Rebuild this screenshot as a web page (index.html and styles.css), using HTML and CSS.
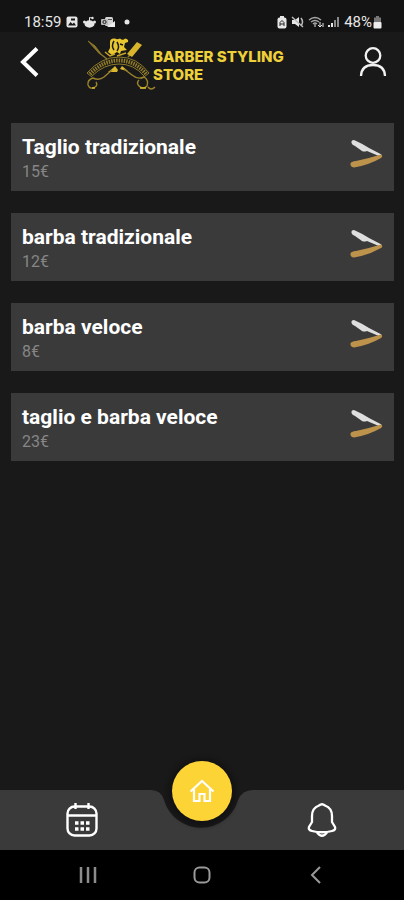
FILE: index.html
```html
<!DOCTYPE html>
<html lang="it">
<head>
<meta charset="utf-8">
<meta name="viewport" content="width=device-width, initial-scale=1">
<title>Barber Styling Store</title>
<link rel="stylesheet" href="styles.css">
</head>
<body>
<svg class="defs" aria-hidden="true">
  <symbol id="razor" viewBox="0 0 34 30">
    <path d="M4 1Q1 1 1.500 4Q2 6 5 7L12 12Q14 13 17 12L30 17.500L31.500 15.500L19 9Q11 4 4 1Z" fill="#dedede"/>
    <path d="M31 15.500Q33.500 17 31 19Q19 26 4 28.500Q0 28 .5 24.500Q1 22.500 6 22Q20 19 31 15.500Z" fill="#bd934c"/>
  </symbol>
</svg>
<div class="app">
  <div class="status">
    <div class="status-group">
      <span class="clock">18:59</span>
      <svg width="12" height="12" viewBox="0 0 12 12"><rect x=".5" y=".5" width="11" height="11" rx="2" fill="#e6e6e6"/><path d="M2 9.500L4.500 6L6.500 8L8 6.500L10 9.500Z" fill="#141414"/><rect x="5" y="2.500" width="4" height="2" fill="#141414"/></svg>
      <svg width="13" height="12" viewBox="0 0 13 12"><ellipse cx="6.500" cy="8" rx="5" ry="3.700" fill="#e6e6e6"/><circle cx="1.500" cy="6" r="1.500" fill="#e6e6e6"/><circle cx="11.500" cy="6" r="1.500" fill="#e6e6e6"/><path d="M6.500 5V1.500L9 2" fill="none" stroke="#e6e6e6"/><circle cx="9.500" cy="2" r="1.200" fill="#e6e6e6"/></svg>
      <svg width="14" height="12" viewBox="0 0 14 12"><rect x="4" y="1" width="8" height="9" rx="1.500" fill="#d5d5d5"/><rect y="3" width="7" height="6" rx="1" fill="#bbb"/><circle cx="3.500" cy="6" r="1.600" fill="none" stroke="#222"/><path d="M6 11H14V5L10 8Z" fill="#eee"/><path d="M7 3.500H11" stroke="#555"/></svg>
      <svg class="dot" width="6" height="6" viewBox="0 0 6 6"><circle cx="3" cy="3" r="2.500" fill="#e6e6e6"/></svg>
    </div>
    <div class="status-group status-right">
      <svg width="10" height="13" viewBox="0 0 10 13"><rect x="3" width="4" height="3" fill="#e6e6e6"/><rect x=".5" y="1.500" width="9" height="11" rx="2" fill="#e6e6e6"/><path d="M3 10V6.500L5 4.500L7 6.500V10M3 8H7" fill="none" stroke="#222"/></svg>
      <svg width="13" height="12" viewBox="0 0 13 12"><path d="M1 4H4L8 1V11L4 8H1Z" fill="#e6e6e6"/><path d="M10 2Q13 6 10 10M1 1L12 11" fill="none" stroke="#bbb" stroke-width="1.500"/></svg>
      <svg width="16" height="12" viewBox="0 0 16 12"><path d="M1 4Q7 -1 13 4M3 6Q7 3 11 6M5 8Q7 6 9 8" fill="none" stroke="#a8a8a8" stroke-width="1.400"/><path d="M7 8V11M12 6V11M10 9L12 11L14 9M15 11V7" fill="none" stroke="#e6e6e6"/></svg>
      <svg width="12" height="12" viewBox="0 0 12 12"><path d="M1 11V9M4 11V7" stroke="#e6e6e6" stroke-width="2"/><path d="M7 11V4M10 11V1" stroke="#8a8a8a" stroke-width="2"/></svg>
      <span class="battery">48%<svg width="9" height="13" viewBox="0 0 9 13"><path d="M3 0H6V1.500H8V6H1V1.500H3Z" fill="#777"/><rect x=".5" y="6" width="8" height="6.500" rx="1" fill="#eee"/></svg></span>
    </div>
  </div>

  <header class="header">
    <button class="icon-button back" aria-label="Indietro">
      <svg width="20" height="32" viewBox="0 0 20 32"><path d="M17 2.500L3 16L17 29.500" fill="none" stroke="#fff" stroke-width="4"/></svg>
    </button>
    <a class="brand" href="#">
      <svg class="logo" width="70" height="54" viewBox="0 0 70 54" fill="none" stroke="#8d7929">
        <path d="M2 4L9 9L15 17L12 15Z" fill="#8d7929"/>
        <path d="M12 15L21 22M42 20L53 8" stroke-width="1.500"/>
        <path d="M41 17L51 5L56 8L46 20Z" fill="#d9b62c" stroke="none"/>
        <path d="M24 5Q24 1 29 1.500Q31 3 34 1.500Q37 4 39 1.500Q43 2 42 5L39 6L38 10L41 13L35 14L34 17L31 15L26 18L22 15L24 11Z" fill="#e8c72f" stroke="none"/>
        <path d="M28 4Q25 9 28 13M31 5Q34 10 31 14M34 7L37 8" stroke="#191919" stroke-width="1.500"/>
        <path d="M19 15L24 19L29 17M31 19L40 16" stroke="#c5a52a" stroke-width="1.500"/>
        <path d="M1 36Q15 20 33 20Q51 20 63 36"/>
        <path d="M6 39Q18 27 33 27Q48 27 58 39"/>
        <path d="M4 37Q17 23.500 33 23.500Q49 23.500 60 37" stroke="#917c2a" stroke-width="4" stroke-dasharray="1.500 1"/>
        <path d="M1 36L6 40M63 36L58 40"/>
        <path d="M22 35L27 31L29 29L32 33L31 35ZM34 32L36 29L42 34L37 33Z" fill="#dcb92c" stroke="none"/>
        <path d="M26 33L18 40Q13 44 7 41Q1 43 2 48Q4 53 9 50Q12 48 10 45M38 32L46 38Q52 43 58 40Q63 43 61 49Q57 53 53 49Q50 46 53 43M62 50Q65 54 69 50" stroke="#9c842b" stroke-width="1.400"/>
        <path d="M6 51H9M54 51H60" stroke="#dcb92c" stroke-width="1.500"/>
      </svg>
      <span class="brand-name">BARBER STYLING<br>STORE</span>
    </a>
    <button class="icon-button" aria-label="Profilo">
      <svg width="28" height="32" viewBox="0 0 28 32" fill="none" stroke="#f2f2f2" stroke-width="2.300"><circle cx="14" cy="9.500" r="7.300"/><path d="M2 30Q2.500 19 14 19Q25.500 19 26 30"/></svg>
    </button>
  </header>

  <main class="services">
    <a class="service" href="#"><span><span class="name">Taglio tradizionale</span><span class="price">15€</span></span><svg class="razor" aria-hidden="true"><use href="#razor"/></svg></a>
    <a class="service" href="#"><span><span class="name">barba tradizionale</span><span class="price">12€</span></span><svg class="razor" aria-hidden="true"><use href="#razor"/></svg></a>
    <a class="service" href="#"><span><span class="name">barba veloce</span><span class="price">8€</span></span><svg class="razor" aria-hidden="true"><use href="#razor"/></svg></a>
    <a class="service" href="#"><span><span class="name">taglio e barba veloce</span><span class="price">23€</span></span><svg class="razor" aria-hidden="true"><use href="#razor"/></svg></a>
  </main>

  <nav class="tabs">
    <button class="tab tab-left" aria-label="Calendario">
      <svg width="34" height="36" viewBox="0 0 34 36" fill="none" stroke="#fff" stroke-width="2.400"><rect x="2.500" y="4.500" width="29" height="29" rx="7"/><path d="M3 13.500H31M10.500 1V7M23.500 1V7"/><path d="M10 21H25M10 27H25" stroke-width="3.500" stroke-dasharray="3.500 2"/></svg>
    </button>
    <div class="notch">
      <svg width="112" height="60" viewBox="0 0 112 60"><path d="M0 0H6Q16 0 19 10A38.500 38.500 0 0 0 93 10Q97 0 108 0H112V60H0Z" fill="#3a3a3a"/></svg>
      <button class="home" aria-label="Home">
        <svg width="26" height="24" viewBox="0 0 26 24" fill="none" stroke="#fff" stroke-width="2.200"><path d="M1.500 12.500L13 2L24.500 12.500M5 10V22H10.500V15H15.500V22H21V10"/></svg>
      </button>
    </div>
    <button class="tab tab-right" aria-label="Notifiche">
      <svg width="30" height="36" viewBox="0 0 30 36" fill="none" stroke="#fff" stroke-width="2.300"><path d="M12 3.500Q15 1 18 3.500Q25 6 25 14V20L28 25Q29 28 25 29Q15 31.500 5 29Q1 28 2 25L5 20V14Q5 6 12 3.500Z"/><path d="M10 30.500Q15 37 20 30.500"/></svg>
    </button>
  </nav>

  <div class="system-nav">
    <button class="icon-button" aria-label="Recenti"><svg width="18" height="18" viewBox="0 0 18 18"><path d="M2 1V17M9 1V17M16 1V17" stroke="#8c8c8c" stroke-width="2.500"/></svg></button>
    <button class="icon-button" aria-label="Schermata Home"><svg width="18" height="18" viewBox="0 0 18 18"><rect x="1.500" y="1.500" width="15" height="15" rx="5" fill="none" stroke="#999" stroke-width="2"/></svg></button>
    <button class="icon-button" aria-label="Indietro di sistema"><svg width="18" height="18" viewBox="0 0 18 18"><path d="M13 1L5 9L13 17" fill="none" stroke="#999" stroke-width="2"/></svg></button>
  </div>
</div>
</body>
</html>
```
FILE: styles.css
```css
* {
  box-sizing: border-box;
}

body {
  margin: 0;
  background: #191919;
  color: #fff;
  font-family: Roboto, "Liberation Sans", sans-serif;
}

button {
  padding: 0;
  border: 0;
  background: none;
  cursor: pointer;
}

a {
  color: inherit;
  text-decoration: none;
}

svg {
  display: block;
  flex: none;
}

.defs {
  position: absolute;
  width: 0;
  height: 0;
}

.app {
  display: flex;
  flex-direction: column;
  min-height: 100vh;
}

.status {
  display: flex;
  justify-content: space-between;
  align-items: flex-end;
  height: 32px;
  padding: 0 22px 0 24px;
  background: #131313;
  color: #e6e6e6;
  font-size: 15px;
  line-height: 20px;
}

.status-group,
.battery {
  display: flex;
  align-items: center;
}

.status-group {
  gap: 5px;
}

.status-right {
  gap: 4px;
}

.battery {
  gap: 1px;
}

.dot {
  margin-left: 4px;
}

.header {
  display: flex;
  align-items: center;
  height: 64px;
  padding: 0 17px 4px 20px;
}

.icon-button {
  display: flex;
  align-items: center;
  justify-content: center;
}

.brand {
  display: flex;
  flex: 1;
  align-items: center;
  margin-left: 46px;
}

.logo {
  margin: 4px -3px 0 0;
}

.brand-name {
  margin-top: 8px;
  color: #edd03a;
  font-family: Inter, Roboto, sans-serif;
  font-size: 15px;
  font-weight: 800;
  line-height: 18px;
}

.services {
  display: flex;
  flex: 1;
  flex-direction: column;
  gap: 22px;
  padding: 27px 10px 22px 11px;
}

.service {
  display: flex;
  align-items: center;
  justify-content: space-between;
  padding: 10px 10px 8px 11px;
  background: #3a3a3a;
}

.name,
.price {
  display: block;
}

.name {
  font-size: 21px;
  font-weight: 700;
  line-height: 28px;
}

.price {
  color: #868686;
  font-size: 16px;
  line-height: 22px;
}

.razor {
  width: 34px;
  height: 30px;
  margin-bottom: 8px;
}

.tabs {
  display: flex;
  height: 60px;
}

.tab {
  display: flex;
  flex: 1;
  align-items: center;
  background: #3a3a3a;
}

.tab-left {
  justify-content: flex-end;
  padding-right: 46px;
}

.tab-right {
  justify-content: flex-start;
  padding-left: 50px;
}

.notch {
  position: relative;
  width: 112px;
}

.home {
  position: absolute;
  top: -29px;
  left: 27px;
  display: flex;
  align-items: center;
  justify-content: center;
  width: 60px;
  height: 60px;
  border-radius: 50%;
  background: #fdd435;
  box-shadow: 0 1px 4px 4px #131315;
}

.tabs {
  padding-left: 2px;
  background: #3a3a3a;
  background: linear-gradient(to right, #3a3a3a 2px, transparent 2px);
}

.system-nav {
  display: flex;
  align-items: center;
  justify-content: center;
  gap: 96px;
  height: 50px;
  background: #000;
}
```
